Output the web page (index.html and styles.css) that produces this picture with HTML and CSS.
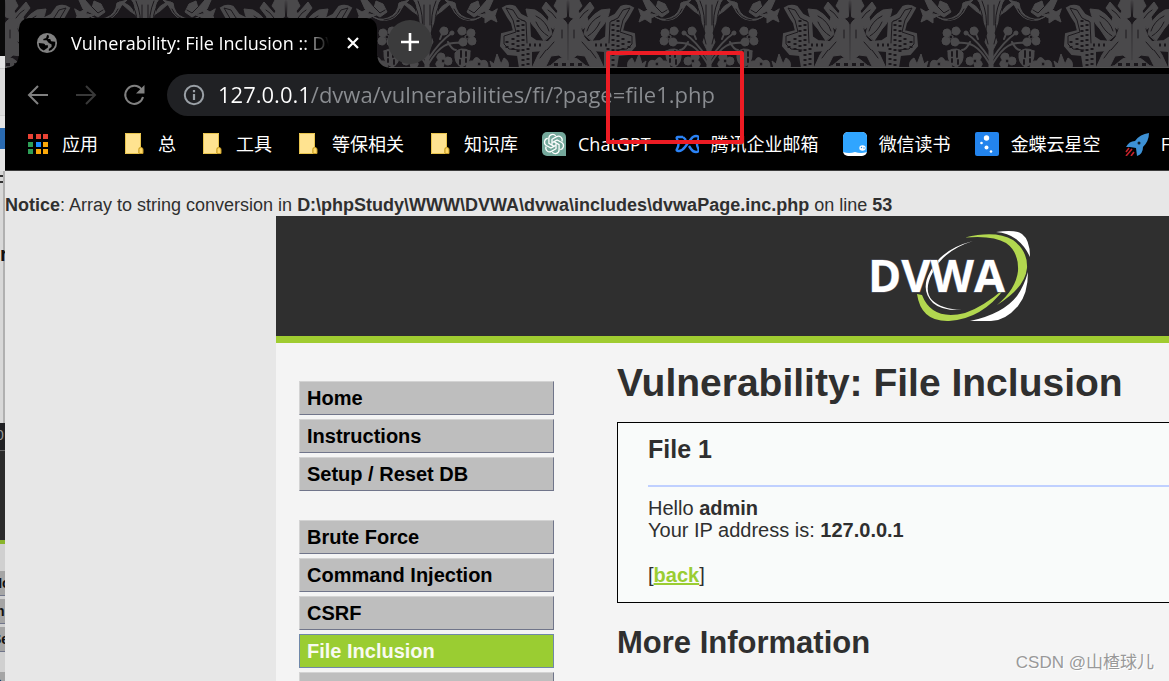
FILE: index.html
```html
<!DOCTYPE html>
<html lang="zh-CN">
<head>
  <meta charset="UTF-8" />
  <meta name="viewport" content="width=device-width, initial-scale=1.0"/>
  <title>Vulnerability: File Inclusion :: DVWA</title>
  <link rel="stylesheet" href="styles.css">
</head>
<body>
  <div class="desktop">

    <!-- edge of the window behind -->
    <aside class="behind">
      <div class="behind-top"></div>
      <div class="behind-page"><b>r</b></div>
      <div class="behind-bar">0</div>
      <div class="behind-header"></div>
      <div class="behind-menu">
        <b>Ho</b>
        <b>In</b>
        <b>Se</b>
        <b class="next">Br</b>
      </div>
    </aside>

    <div class="browser">
      <div class="tabs">
        <svg class="theme" aria-hidden="true">
          <defs>
            <g id="half" fill="#4a494b" stroke="#4a494b" stroke-linecap="round">
              <!-- fairy -->
              <path d="M1 0h10l3 6-4 5 3 5-6 3-5-2zM1 24q3-7 9-4 4 3 3 9l3 8 8 9 6 9 6 13H23l-6-12-8-1-6 5 5 7H1z"/>
              <path d="M16 34q2-16 17-24l9-1q-2 12-10 20l-8 12zM8 18L22 2l4 6-7 9 2 7-6 5z"/>
              <path d="M19 31q3-10 13-15M20 36q8-5 12-14M12 18q4-6 8-8M6 30v8M14 42l7 8M28 58l-6-8" stroke="#1b181c" fill="none"/>
              <path d="M0 61q6-6 12 0t10 6H0" />
              <path d="M2 63h4v3H2zM10 63h4v3h-4z" fill="#1b181c" stroke="none"/>
              <!-- lace -->
              <path d="M37 68V51l-13-1-4-8 12-1 6-4 1-18 8-4 6-8q6-3 12 1l-5 9-4 6-2 8 12 3 1 12-7 8-10 1-2 13z" stroke-width="2"/>
              <path d="M40 65V48M45 66V20M50 52V17M55 50V36M61 48V38M27 45h14" stroke="#1b181c" stroke-width="3" stroke-dasharray="2 3" fill="none" stroke-linecap="butt"/>
              <path d="M41 43l1-21 8-4 5-8 7-2-7 12-3 12 12 4v8l-5 5-11 1" stroke="#1b181c" fill="none"/>
              <!-- leaves on the ground -->
              <path d="M60 68q-2-7 4-10l3 6 4-10 3 10 4-3-2 7zM80 67q0-9 7-6 5-7 8 0 7-1 7 7z"/>
              <circle cx="89" cy="64" r="2" fill="#1b181c"/>
              <!-- bow and curl -->
              <path d="M71 9l5 3 7-4-1 6 8 1-7 3v5l-6-4-6 3 2-6z"/>
              <path d="M84 14q8 8 18 4 10-4 11-15l10-3q-7 6-10 13-7 9-19 7-7-2-10-6z"/>
              <path d="M81 0l7 8 2-7 7 3 4 8-7 5-7-4-8-4-4-9z"/>
              <path d="M88 7l6 6 5-3M98 20q12-1 16-11" fill="none" stroke="#1b181c"/>
              <!-- blossom -->
              <circle cx="97" cy="33" r="4"/><circle cx="106" cy="31" r="4"/>
              <circle cx="96" cy="41" r="4"/><circle cx="105" cy="42" r="4"/>
              <circle cx="101" cy="37" r="2" fill="#1b181c"/>
              <path d="M107 43q10-1 17 3t15 17M116 33q12 8 23 25M120 42q-4 8-8 8M124 29l4 10" fill="none" stroke-width="2"/>
              <circle cx="124" cy="31" r="4"/><circle cx="116" cy="33" r="2"/>
              <path d="M98 51q10-5 15 2 1 10-6 14-10-2-9-16z"/>
              <path d="M102 52v4M107 51v6M102 59v3M108 60v4" stroke="#1b181c" stroke-width="2"/>
              <circle cx="120" cy="61" r="4"/><circle cx="127" cy="57" r="4"/><circle cx="128" cy="64" r="4"/>
              <circle cx="125" cy="61" r="2" fill="#1b181c"/>
              <!-- plume -->
              <path d="M116 2q12 2 14 12 3-8-3-15h14v68h-2V50l-4-8 3-9-4-11-2-7-6-4z"/>
              <path d="M126 2q7 8 7 20M132 1q6 14 4 30M138 5v20M136 36l2 8" fill="none" stroke="#1b181c"/>
            </g>
            <pattern id="damask" x="-1" width="282" height="68" patternUnits="userSpaceOnUse">
              <rect width="282" height="68" fill="#1b181c"/>
              <use href="#half"/>
              <use href="#half" transform="translate(282 0) scale(-1 1)"/>
            </pattern>
          </defs>
          <rect width="100%" height="68" fill="url(#damask)"/>
          <rect y="67" width="100%" height="1" fill="#555"/>
        </svg>
        <div class="tab">
          <svg width="22" height="22" viewBox="0 0 24 24" aria-hidden="true"><path fill="#808080" d="M12 1a11 11 0 1 0 0 22 11 11 0 0 0 0-22zM8.500 20.300A9 9 0 0 1 3 12l5 .5q2 0 2 2h3v2.500l-3 2zM14 20.600v-2.100l3-2.500v-2.500l-3-1.500-2.500-3H8V7.500l3-1 1-3 1-.4 1 1V6l-1 1.500h2.500l1 2.500 4.500.5a9 9 0 0 1-7 10.100z"/></svg>
          <span class="tab-title">Vulnerability: File Inclusion :: DVWA</span>
          <button class="tab-close" aria-label="Close"><svg width="12" height="12" viewBox="0 0 12 12"><path d="M1 1l10 10M11 1L1 11" stroke="#fff" stroke-width="2.200"/></svg></button>
        </div>
        <button class="new-tab" aria-label="New tab"><svg width="18" height="18" viewBox="0 0 18 18"><path d="M9 0v18M0 9h18" stroke="#fff" stroke-width="2.600"/></svg></button>
      </div>

      <div class="toolbar">
        <button aria-label="Back"><svg width="24" height="24" viewBox="0 0 24 24"><path d="M22 12H3M12 3l-9 9 9 9" fill="none" stroke="#808080" stroke-width="2"/></svg></button>
        <button aria-label="Forward"><svg width="24" height="24" viewBox="0 0 24 24"><path d="M2 12h19M12 3l9 9-9 9" fill="none" stroke="#393939" stroke-width="2"/></svg></button>
        <button aria-label="Reload"><svg width="24" height="24" viewBox="0 0 24 24"><path d="M19.500 6.500A9 9 0 1 0 21 14" fill="none" stroke="#808080" stroke-width="2"/><path d="M22.500 2v8.500H14z" fill="#808080"/></svg></button>
        <div class="address">
          <svg width="22" height="22" viewBox="0 0 22 22" aria-hidden="true"><circle cx="11" cy="11" r="9.200" fill="none" stroke="#9aa0a6" stroke-width="2"/><path d="M11 10v6M11 6v2.200" stroke="#9aa0a6" stroke-width="2.200"/></svg>
          <input class="url" type="text" aria-label="Address" spellcheck="false" value="127.0.0.1/dvwa/vulnerabilities/fi/?page=file1.php">
        </div>
      </div>

      <nav class="bookmarks">
        <a href="#"><svg viewBox="0 0 24 24"><path fill="#ea4335" d="M2 2h5v5H2zM10 2h5v5h-5zM17 2h5v5h-5z"/><path fill="#2e9e57" d="M2 10h5v5H2zM2 17h5v5H2z"/><path fill="#1a8cff" d="M10 10h5v5h-5z"/><path fill="#fba90a" d="M17 10h5v5h-5zM10 17h5v5h-5zM17 17h5v5h-5z"/></svg>应用</a>
        <a href="#"><svg viewBox="0 0 24 24"><use href="#folder"/></svg>总</a>
        <a href="#"><svg viewBox="0 0 24 24"><use href="#folder"/></svg>工具</a>
        <a href="#"><svg viewBox="0 0 24 24"><use href="#folder"/></svg>等保相关</a>
        <a href="#"><svg viewBox="0 0 24 24"><use href="#folder"/></svg>知识库</a>
        <a href="#"><svg viewBox="0 0 24 24"><path d="M5 0h14a5 5 0 0 1 5 5v19H5a5 5 0 0 1-5-5V5a5 5 0 0 1 5-5z" fill="#74a89b"/><g id="knot" fill="none" stroke="#fff" stroke-width="1.300"><path id="petal" d="M10 12.800V7.300l4.600-2.700a3.800 3.800 0 0 1 5.300 4.800"/><use href="#petal" transform="rotate(60 12 12)"/><use href="#petal" transform="rotate(120 12 12)"/><use href="#petal" transform="rotate(180 12 12)"/><use href="#petal" transform="rotate(240 12 12)"/><use href="#petal" transform="rotate(300 12 12)"/></g></svg>ChatGPT</a>
        <a href="#"><svg viewBox="0 0 24 24"><path d="M8 5H3q-2 0-1 2 3 5 0 10-1 2 1 2h1q3 0 6-4l6-8q2-3 5-3 4 0 2 4-2 4 0 8 2 4-2 4-3 0-5-3l-2-3M8 5l3 3" fill="none" stroke="#2b83f6" stroke-width="2.400"/></svg>腾讯企业邮箱</a>
        <a href="#"><svg viewBox="0 0 24 24"><rect width="24" height="24" rx="5" fill="#fff"/><path d="M5 0h14a5 5 0 0 1 5 5v15q-6 2-12 0-6 2-12 0V5a5 5 0 0 1 5-5z" fill="#30a5ff"/><ellipse cx="19.500" cy="16" rx="3.200" ry="2.800" fill="#fff"/><circle cx="18.500" cy="15.500" r=".7" fill="#258be0"/><circle cx="21" cy="16" r=".7" fill="#258be0"/></svg>微信读书</a>
        <a href="#"><svg viewBox="0 0 24 24"><rect width="24" height="24" rx="2" fill="#2384ed"/><g fill="#fff"><circle cx="11.500" cy="6" r="2.700"/><circle cx="6.500" cy="11" r="1.300"/><circle cx="11.500" cy="15.500" r="2"/><circle cx="16" cy="19.500" r="1.300"/></g></svg>金蝶云星空</a>
        <a href="#"><svg viewBox="0 0 24 24"><path d="M24 1q-9 1-14 8-6 0-9 6h4l6 1 1 8q6-2 6-9 6-6 6-14z" fill="#3d91d5"/><circle cx="14" cy="11" r="1.500" fill="#101d28"/><path d="M4 16l-3 4M7 17l-6 7M9 20l-3 4" stroke="#c5222a" stroke-width="1.600"/></svg>FreeBuf</a>
        <svg class="defs" aria-hidden="true"><defs><g id="folder"><path d="M3 1h16v15h1v6H3z" fill="#ffe390"/><path d="M3.500 1.500h15V15q-2 0-2 3v3.500h-13z" fill="none" stroke="#e8c44d"/><path d="M17 21.500v-4q0-2 2-2t2 2v4z" fill="#ffd866" stroke="#c89d28"/></g></defs></svg>
      </nav>

      <main class="page">
        <p class="notice"><b>Notice</b>: Array to string conversion in <b>D:\phpStudy\WWW\DVWA\dvwa\includes\dvwaPage.inc.php</b> on line <b>53</b></p>
        <div class="container">
          <header class="header">
            <svg class="logo" width="159" height="90" viewBox="0 0 159 90" role="img" aria-label="DVWA">
              <path fill="#fff" d="M102 10Q70 18 59 41 49 59 62 72 71 80 91 79 70 78 61 69 52 59 62 41 73 19 102 10z"/>
              <path fill="#fff" d="M125 1Q144-2 151 3 159 9 159 26 154 15 145 8 137 2 125 1zM157 41Q157 63 147 75 134 90 120 90H99Q132 83 146 65 153 55 157 41z"/>
              <path fill="#b2d74f" d="M94 6.500Q125-1 142 9 157 20 156 37 154 57 126 74 145 58 147 40 148 21 135 12 122 4 94 6.500z"/>
              <path fill="#b2d74f" d="M46 63Q50 91 78 90 111 88 134 57 112 76 94 82 61 90 51 64z"/>
              <text class="logo-text" x="-3" y="61">DVWA</text>
            </svg>
          </header>
          <div class="columns">
            <nav class="menu">
              <ul>
                <li><a href="#">Home</a></li>
                <li><a href="#">Instructions</a></li>
                <li><a href="#">Setup / Reset DB</a></li>
              </ul>
              <ul>
                <li><a href="#">Brute Force</a></li>
                <li><a href="#">Command Injection</a></li>
                <li><a href="#">CSRF</a></li>
                <li><a class="selected" href="#">File Inclusion</a></li>
                <li><a href="#">File Upload</a></li>
              </ul>
            </nav>
            <section class="body">
              <h1>Vulnerability: File Inclusion</h1>
              <div class="vulnerable">
                <h3>File 1</h3>
                <hr>
                <p>Hello <b>admin</b><br>Your IP address is: <b>127.0.0.1</b></p>
                <p class="back">[<a href="#">back</a>]</p>
              </div>
              <h2>More Information</h2>
            </section>
          </div>
        </div>
      </main>
    </div>

    <div class="marker"></div>
    <div class="watermark">CSDN @山楂球儿</div>
  </div>
</body>
</html>
```
FILE: styles.css
```css
* {
  box-sizing: border-box;
  margin: 0;
  padding: 0;
}

body {
  font-family: "Liberation Sans", Arial, sans-serif;
  color: #2f2f2f;
  background: #e7e7e7;
}

button {
  background: none;
  border: none;
  cursor: pointer;
  display: flex;
  align-items: center;
  justify-content: center;
}

.desktop {
  position: relative;
  display: grid;
  grid-template-columns: 5px minmax(0, 1fr);
  height: 100vh;
  overflow: hidden;
}

/* Window behind */
.behind {
  background: #d0d0d0;
  overflow: hidden;
  font-size: 14px;
  color: #111;
}

.behind-top {
  height: 171px;
  background: linear-gradient(#0a0a0a 56px, #e4e4e4 56px, #e4e4e4 68px, #bbb 68px, #dcdcdc 69px, #dcdcdc 115px, #bbb 115px, #e4e4e4 116px, #e4e4e4 128px, #2a6ab0 128px, #2a6ab0 149px, #e4e4e4 149px);
}

.behind-page {
  height: 252px;
  padding-top: 72px;
  background: linear-gradient(#d8d8d8 4px, #333 4px, #333 6px, #d8d8d8 6px, #d8d8d8 10px, #333 10px, #333 12px, #d8d8d8 12px);
  border-right: 2px solid #b0b0b0;
  font-size: 20px;
}

.behind-bar {
  height: 28px;
  padding-top: 4px;
  background: #202124;
  border-bottom: 1px solid #666;
  color: #999;
  text-indent: -4px;
}

.behind-header {
  height: 93px;
  background: #2b2b2b;
  border-bottom: 4px solid #8ab52c;
}

.behind-menu {
  display: flex;
  flex-direction: column;
  gap: 3px;
  padding-top: 27px;
}

.behind-menu b {
  height: 25px;
  line-height: 25px;
  background: #a5a5a5;
  border-bottom: 1px solid #70758a;
  text-indent: -8px;
}

.behind-menu .next {
  margin-top: 17px;
}

/* Browser window */
.browser {
  display: flex;
  flex-direction: column;
  min-width: 0;
  font-family: "Open Sans", "Noto Sans CJK SC", sans-serif;
}

.tabs {
  position: relative;
  display: flex;
  align-items: flex-start;
  height: 68px;
  padding: 18px 0 0 14px;
  flex: none;
}

.theme {
  position: absolute;
  top: 0;
  left: 0;
  width: 100%;
  height: 68px;
}

.tab {
  position: relative;
  display: flex;
  align-items: center;
  width: 358px;
  height: 50px;
  padding: 0 14px 0 17px;
  background: #000;
  border-radius: 10px 10px 0 0;
}

/* curved feet of the tab */
.tab::before,
.tab::after {
  content: "";
  position: absolute;
  bottom: 0;
  width: 12px;
  height: 12px;
}

.tab::before {
  right: 100%;
  background: radial-gradient(circle at 0 0, transparent 11px, #000 12px);
}

.tab::after {
  left: 100%;
  background: radial-gradient(circle at 100% 0, transparent 11px, #000 12px);
}

.tab-title {
  flex: 1;
  margin-left: 13px;
  overflow: hidden;
  white-space: nowrap;
  font-size: 18px;
  color: #fff;
  -webkit-mask-image: linear-gradient(to left, transparent 6px, #000 32px);
  mask-image: linear-gradient(to left, transparent 6px, #000 32px);
}

.tab-close {
  width: 20px;
  height: 20px;
  margin-left: 8px;
}

.new-tab {
  position: relative;
  width: 44px;
  height: 44px;
  margin: 2px 0 0 11px;
  border-radius: 50%;
  background: #3b3b3c;
}

.toolbar {
  display: flex;
  align-items: center;
  gap: 24px;
  height: 54px;
  padding-left: 21px;
  background: #000;
  flex: none;
}

.address {
  flex: 1;
  display: flex;
  align-items: center;
  gap: 13px;
  height: 42px;
  margin-left: -3px;
  padding-left: 16px;
  background: #202124;
  border-radius: 21px 0 0 21px;
}

.url {
  flex: 1;
  min-width: 0;
  height: 36px;
  padding-bottom: 2px;
  border: none;
  outline: none;
  font-family: inherit;
  font-size: 22px;
  /* host in white, path in grey */
  background: linear-gradient(to right, #fff 90px, #8a8d91 90px);
  -webkit-background-clip: text;
  background-clip: text;
  color: transparent;
}

.bookmarks {
  display: flex;
  align-items: center;
  gap: 24px;
  height: 49px;
  padding: 0 0 5px 21px;
  background: #000;
  border-bottom: 1px solid #3c3c3c;
  overflow: hidden;
  flex: none;
}

.bookmarks a {
  display: flex;
  align-items: center;
  gap: 12px;
  flex: none;
  font-size: 18px;
  line-height: 24px;
  color: #fff;
  text-decoration: none;
  white-space: nowrap;
}

.bookmarks a svg {
  width: 24px;
  height: 24px;
}

.bookmarks .defs {
  width: 0;
  height: 0;
}

/* DVWA page */
.page {
  flex: 1;
  min-height: 0;
  overflow: hidden;
  padding-top: 23px;
  background: #e7e7e7;
  font-family: "Liberation Sans", Arial, sans-serif;
}

.notice {
  font-size: 18px;
  line-height: 22px;
}

.container {
  margin-left: 271px;
  background: #f4f4f4;
}

.header {
  height: 127px;
  padding-top: 15px;
  background: #2f2f2f;
  border-bottom: 7px solid #a0cc31;
}

.logo {
  display: block;
  margin-left: 66.600%;
  overflow: visible;
}

.logo-text {
  font-family: "Open Sans", sans-serif;
  font-size: 45px;
  font-weight: bold;
  fill: #fff;
  stroke: #5c6070;
  stroke-width: 1;
  paint-order: stroke;
}

.columns {
  display: flex;
  gap: 63px;
  padding-left: 23px;
}

.menu {
  width: 255px;
  padding-top: 38px;
  flex: none;
}

.menu ul {
  list-style: none;
  display: flex;
  flex-direction: column;
  gap: 4px;
  margin-bottom: 29px;
}

.menu a {
  display: block;
  height: 34px;
  padding-left: 7px;
  border: 1px solid;
  border-color: #d3d3d3 #70758a #70758a #d3d3d3;
  background: #bebebe;
  font-size: 20px;
  font-weight: bold;
  line-height: 32px;
  color: #000;
  text-decoration: none;
}

.menu a.selected {
  background: #9acd32;
  border-color: #7088a8;
  color: #f8faf0;
}

.body {
  flex: 1;
  min-width: 0;
  padding-top: 18px;
}

h1 {
  font-size: 39px;
  line-height: 44px;
  white-space: nowrap;
}

.vulnerable {
  margin: 17px 0 22px;
  padding: 11px 0 16px 30px;
  border: 1px solid #000;
  border-right: none;
  background: #f9fbfa;
  font-size: 20px;
  line-height: 22px;
}

h3 {
  font-size: 25px;
  line-height: 30px;
}

hr {
  margin: 21px 0 10px;
  border: none;
  border-top: 2px solid #c0d0ff;
}

.back {
  margin-top: 23px;
}

.back a {
  font-weight: bold;
  color: #9acd32;
}

h2 {
  font-size: 31px;
  line-height: 36px;
}

/* Overlays */
.marker {
  position: absolute;
  top: 51px;
  left: 606px;
  width: 138px;
  height: 93px;
  border: 4px solid #ed1c24;
  border-radius: 2px;
}

.watermark {
  position: absolute;
  right: 15px;
  bottom: 6px;
  font-family: "Liberation Sans", "Noto Sans CJK SC", sans-serif;
  font-size: 17px;
  line-height: 24px;
  color: #999;
  text-shadow: 1px 1px 0 #fff;
}
```
